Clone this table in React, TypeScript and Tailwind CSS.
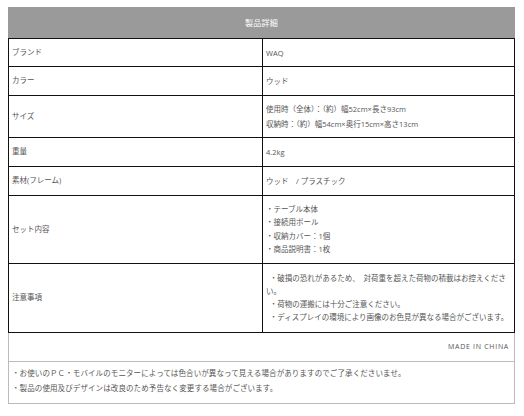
const rows: { label: string; h: string; lines: string[]; leading: string }[] = [
  { label: "ブランド", h: "h-[28px]", lines: ["WAQ"], leading: "leading-[14px]" },
  { label: "カラー", h: "h-[29px]", lines: ["ウッド"], leading: "leading-[14px]" },
  {
    label: "サイズ",
    h: "h-[42px]",
    lines: ["使用時（全体）：（約）幅52cm×長さ93cm", "収納時：（約）幅54cm×奥行15cm×高さ13cm"],
    leading: "leading-[15px]",
  },
  { label: "重量", h: "h-[29px]", lines: ["4.2kg"], leading: "leading-[14px]" },
  { label: "素材(フレーム)", h: "h-[29px]", lines: ["ウッド　/ プラスチック"], leading: "leading-[14px]" },
  {
    label: "セット内容",
    h: "h-[68px]",
    lines: ["・テーブル本体", "・接続用ポール", "・収納カバー：1個", "・商品説明書：1枚"],
    leading: "leading-[13.5px]",
  },
  {
    label: "注意事項",
    h: "h-[69px]",
    lines: [
      "\u2002・破損の恐れがあるため、\u2002対荷重を超えた荷物の積載はお控えください。",
      "\u2002・荷物の運搬には十分ご注意ください。",
      "\u2002・ディスプレイの環境により画像のお色見が異なる場合がございます。",
    ],
    leading: "leading-[13px]",
  },
];

export default function App() {
  return (
    <div className="w-[524px] h-[416px] bg-white pt-[7px] pl-[8px] font-['Open_Sans','Noto_Sans_CJK_JP',sans-serif] text-[#555] text-[7.5px]">
      <div className="w-[507px]">
        <div className="h-[31px] bg-[#9a9a9a] flex items-center justify-center text-white text-[8px] tracking-[0.3px]">
          製品詳細
        </div>

        {/* spec table */}
        <div className="border-t border-l border-r border-[#111]">
          {rows.map((row) => (
            <div
              key={row.label}
              className={`grid grid-cols-[254px_1fr] border-b border-[#111] ${row.h}`}
            >
              <div className="flex items-center pl-[3px] border-r border-[#111]">{row.label}</div>
              <div className={`flex flex-col justify-center pl-[3px] pr-[2px] ${row.leading}`}>
                {row.lines.map((line) => (
                  <div key={line}>{line}</div>
                ))}
              </div>
            </div>
          ))}
        </div>

        <div className="border-l border-r border-[#bbb]">
          <div className="h-[29px] flex items-center justify-end pr-[5px] border-b border-[#bbb] text-[7px] tracking-[0.7px]">
            MADE IN CHINA
          </div>
          <div className="h-[42px] pt-[4px] pl-[3px] border-b border-[#bbb] leading-[15px] tracking-[0.1px]">
            <div>・お使いのＰＣ・モバイルのモニターによっては色合いが異なって見える場合がありますのでご了承くださいませ。</div>
            <div>・製品の使用及びデザインは改良のため予告なく変更する場合がございます。</div>
          </div>
        </div>
      </div>
    </div>
  );
}
